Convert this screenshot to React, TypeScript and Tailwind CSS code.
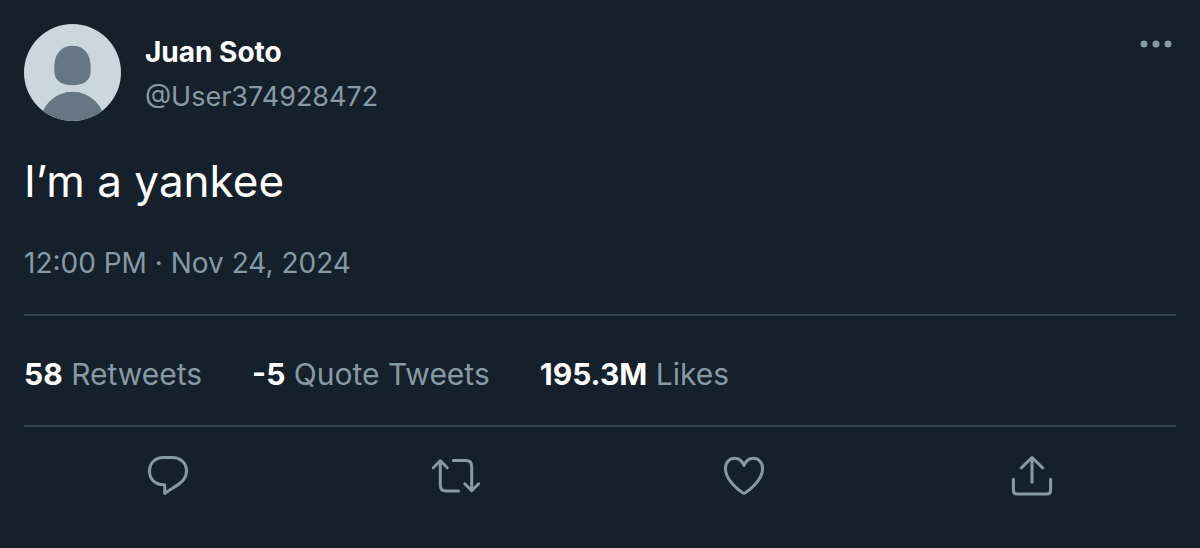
import type { ReactNode } from "react";

const stats = [
  { value: "58", label: "Retweets" },
  { value: "-5", label: "Quote Tweets" },
  { value: "195.3M", label: "Likes" },
];

function Icon({ children }: { children: ReactNode }) {
  return (
    <svg
      viewBox="0 0 48 48"
      className="size-12 overflow-visible"
      fill="none"
      stroke="currentColor"
      strokeWidth="3"
      strokeLinecap="round"
      strokeLinejoin="round"
      aria-hidden="true"
    >
      {children}
    </svg>
  );
}

const actions = [
  {
    name: "Reply",
    icon: (
      <path
        d="M20.7 32.8H19.5C11 32.6 5.5 27 5.5 19.2C5.5 11 11.3 5.5 19.5 5.5H28C36.5 5.5 42.5 11 42.5 19C42.5 24.2 40 28.2 35.8 31.2C31.5 34.4 26 37.8 20.7 41.4Z"
      />
    ),
  },
  {
    name: "Retweet",
    icon: (
      <path d="M1.3 15.8L8.3 8.8L15.3 15.8M8.3 9.3V33.2Q8.3 39 14.2 39H26.6M21.4 8.6H33.8Q39.7 8.6 39.7 14.5V38.8M32.7 31.8L39.7 38.8L46.7 31.8" />
    ),
  },
  {
    name: "Like",
    icon: (
      <path d="M24 13.4C22 8.8 18.7 6.3 14.8 6.3C9.2 6.3 5.4 10.6 5.4 16.6C5.4 27.5 17.5 37.3 22.6 40.7Q24 41.6 25.4 40.7C30.5 37.3 42.6 27.5 42.6 16.6C42.6 10.6 38.8 6.3 33.2 6.3C29.3 6.3 26 8.8 24 13.4Z" />
    ),
  },
  {
    name: "Share",
    icon: (
      <path d="M13.3 15.8L24 5.5L34.7 15.8M24 6V30.2M5.4 27.3V38.2Q5.4 42 9.2 42H38.8Q42.6 42 42.6 38.2V27.3" />
    ),
  },
];

export default function App() {
  return (
    <main className="min-h-screen bg-[#15202b] px-6 pt-6 font-['Inter',sans-serif] text-[#8899a6]">
      <article>
        <header className="flex items-start gap-6">
          <svg viewBox="0 0 96 96" className="size-[97px] shrink-0" role="img" aria-label="Profile picture">
            <clipPath id="avatar">
              <circle cx="48" cy="48" r="48" />
            </clipPath>
            <g clipPath="url(#avatar)">
              <rect width="96" height="96" fill="#ccd6dd" />
              <path
                fill="#667685"
                d="M48 21.5C37 21.5 30 29.5 30 42.5V46C30 56 36.5 60.5 48 60.5S66 56 66 46V42.5C66 29.5 59 21.5 48 21.5Z"
              />
              <circle cx="48" cy="99" r="32" fill="#667685" />
            </g>
          </svg>
          <div className="grow pt-2">
            <h1 className="text-[28px] leading-10 font-bold text-white">Juan Soto</h1>
            <p className="text-[27px] leading-[49px]">@User374928472</p>
          </div>
          <button type="button" aria-label="More" className="mt-4 mr-1">
            <svg viewBox="0 0 32 8" className="h-2 w-8" fill="currentColor" aria-hidden="true">
              <circle cx="4" cy="4" r="3.5" />
              <circle cx="16" cy="4" r="3.5" />
              <circle cx="28" cy="4" r="3.5" />
            </svg>
          </button>
        </header>
        <p className="mt-8 text-[44px] leading-14 text-white">I’m a yankee</p>
        <p className="mt-7 text-[28px] leading-[53px]">
          <time dateTime="2024-11-24T12:00">12:00 PM · Nov 24, 2024</time>
        </p>
        <ul className="mt-6 flex gap-[50px] border-y-2 border-[#38444d] pt-9 pb-7 text-[30px] leading-[45px]">
          {stats.map((stat) => (
            <li key={stat.label}>
              <a href="#" className="whitespace-nowrap">
                <strong className="font-bold text-white">{stat.value}</strong> {stat.label}
              </a>
            </li>
          ))}
        </ul>
        <div className="grid grid-cols-4 justify-items-center pt-[25px]">
          {actions.map((action) => (
            <button key={action.name} type="button" aria-label={action.name}>
              <Icon>{action.icon}</Icon>
            </button>
          ))}
        </div>
      </article>
    </main>
  );
}
